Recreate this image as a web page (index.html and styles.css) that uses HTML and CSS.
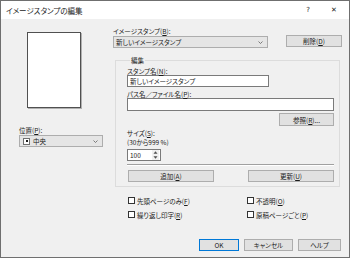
FILE: index.html
```html
<!DOCTYPE html>
<html lang="ja">
<head>
    <meta charset="UTF-8">
    <title>イメージスタンプの編集</title>
    <link rel="stylesheet" href="styles.css">
</head>
<body>
    <div class="dialog">
        <div class="titlebar">
            <span class="title">イメージスタンプの編集</span>
            <span class="tb-btn">?</span>
            <span class="tb-btn close">✕</span>
        </div>

        <div class="content">
            <div class="main">
                <!-- 左側: プレビューと位置 -->
                <div class="left">
                    <div class="preview"></div>
                    <div class="label pos-label">位置(<u>P</u>):</div>
                    <div class="combo pos-combo">
                        <span class="pos-icon"><span class="dot"></span></span>
                        <span class="combo-text">中央</span>
                        <svg class="chev" width="5" height="3" viewBox="0 0 5 3"><polyline points="0.5,0.5 2.5,2.5 4.5,0.5" fill="none" stroke="#606060" stroke-width="0.8"/></svg>
                    </div>
                </div>

                <!-- 右側 -->
                <div class="right">
                    <div class="label">イメージスタンプ(<u>B</u>):</div>
                    <div class="stamp-row">
                        <div class="combo stamp-combo">
                            <span class="combo-text">新しいイメージスタンプ</span>
                            <svg class="chev" width="5" height="3" viewBox="0 0 5 3"><polyline points="0.5,0.5 2.5,2.5 4.5,0.5" fill="none" stroke="#606060" stroke-width="0.8"/></svg>
                        </div>
                        <button class="btn del-btn">削除(<u>D</u>)</button>
                    </div>

                    <fieldset class="group">
                        <legend>編集</legend>
                        <div class="label">スタンプ名(<u>N</u>):</div>
                        <div class="input name-input">新しいイメージスタンプ</div>

                        <div class="label path-label">パス名／ファイル名(<u>P</u>):</div>
                        <div class="input path-input"></div>
                        <div class="browse-row">
                            <button class="btn browse-btn">参照(<u>R</u>)...</button>
                        </div>

                        <div class="label size-label">サイズ(<u>S</u>):</div>
                        <div class="label size-range">(30から999 %)</div>
                        <div class="spin">
                            <span class="spin-val">100</span>
                            <span class="spin-btns">
                                <svg width="5" height="3" viewBox="0 0 5 3"><polygon points="2.5,0.3 4.5,2.7 0.5,2.7" fill="#505050"/></svg>
                                <svg width="5" height="3" viewBox="0 0 5 3"><polygon points="0.5,0.3 4.5,0.3 2.5,2.7" fill="#505050"/></svg>
                            </span>
                        </div>
                        <div class="sep"></div>
                        <div class="group-btns">
                            <button class="btn">追加(<u>A</u>)</button>
                            <button class="btn">更新(<u>U</u>)</button>
                        </div>
                    </fieldset>

                    <div class="checks">
                        <label class="check"><span class="box"></span>先頭ページのみ(<u>F</u>)</label>
                        <label class="check"><span class="box"></span>不透明(<u>O</u>)</label>
                        <label class="check"><span class="box"></span>繰り返し印字(<u>R</u>)</label>
                        <label class="check"><span class="box"></span>原稿ページごと(<u>P</u>)</label>
                    </div>
                </div>
            </div>

            <div class="footer">
                <button class="btn ok-btn">OK</button>
                <button class="btn cancel-btn">キャンセル</button>
                <button class="btn help-btn">ヘルプ</button>
            </div>
        </div>
    </div>
</body>
</html>
```

FILE: styles.css
```css
* {
    box-sizing: border-box;
}
html, body {
    margin: 0;
    padding: 0;
}
body {
    width: 350px;
    height: 258px;
    overflow: hidden;
    font-family: "Noto Sans CJK JP", sans-serif;
    font-size: 6.5px;
    font-feature-settings: "palt";
    color: #1a1a1a;
}
u {
    text-decoration-thickness: 0.5px;
    text-underline-offset: 1px;
}
.dialog {
    width: 350px;
    height: 258px;
    border: 1px solid #6f6f6f;
    background-color: #f0f0f0;
    display: flex;
    flex-direction: column;
}
.titlebar {
    height: 18px;
    background-color: #fff;
    display: flex;
    align-items: center;
    padding-left: 5px;
    font-size: 7.5px;
}
.title {
    flex: 1;
}
.tb-btn {
    width: 26px;
    text-align: center;
    font-family: "DejaVu Sans", sans-serif;
    font-size: 7px;
}
.close {
    font-size: 7px;
    margin-right: 2px;
}
.content {
    flex: 1;
    display: flex;
    flex-direction: column;
}
.main {
    display: flex;
}
.label {
    height: 8px;
    line-height: 8px;
    white-space: nowrap;
}

/* 左側 */
.left {
    width: 84px;
    margin-left: 18px;
}
.preview {
    width: 54px;
    height: 76px;
    margin: 13px 0 0 8px;
    background-color: #fff;
    border: 1px solid #505050;
    box-shadow: 1px 1px 0 #b0b0b0;
}
.pos-label {
    margin-top: 18px;
}
.combo {
    height: 12px;
    margin-top: 1px;
    background-color: #e5e5e5;
    border: 1px solid #adadad;
    display: flex;
    align-items: center;
    padding: 0 4px 0 2px;
}
.combo-text {
    flex: 1;
}
.pos-icon {
    width: 7px;
    height: 7px;
    border: 1px solid #707070;
    background-color: #fff;
    display: flex;
    align-items: center;
    justify-content: center;
    margin: 0 3px 0 1px;
}
.dot {
    width: 2px;
    height: 2px;
    background-color: #202020;
}

/* 右側 */
.right {
    margin-left: 10px;
    width: 229px;
    padding-top: 8px;
}
.stamp-row {
    display: flex;
    align-items: flex-start;
}
.stamp-combo {
    width: 155px;
}
.btn {
    font-family: inherit;
    font-size: 6.5px;
    font-feature-settings: "palt";
    color: #1a1a1a;
    height: 12px;
    padding: 0;
    background-color: #e1e1e1;
    border: 1px solid #adadad;
    border-radius: 0;
    line-height: 10px;
}
.del-btn {
    width: 56px;
    margin-left: 18px;
}
.group {
    margin: 8px 0 0 2px;
    width: 225px;
    border: 1px solid #dcdcdc;
    padding: 3px 5px 4px 11px;
}
.group legend {
    height: 8px;
    line-height: 8px;
    padding: 0 1px;
    margin-left: 3px;
}
.input {
    height: 12px;
    background-color: #fff;
    border: 1px solid #7a7a7a;
    line-height: 10px;
    padding-left: 2px;
}
.name-input {
    width: 142px;
}
.path-label {
    margin-top: 3px;
}
.path-input {
    width: 207px;
    height: 13px;
}
.browse-row {
    display: flex;
    justify-content: flex-end;
    margin-top: 2px;
}
.browse-btn {
    width: 55px;
    height: 13px;
}
.size-label,
.size-range {
    height: 9px;
    line-height: 9px;
}
.size-label {
    margin-top: 3px;
}
.spin {
    width: 34px;
    height: 12px;
    margin-top: 2px;
    background-color: #fff;
    border: 1px solid #7a7a7a;
    display: flex;
    align-items: center;
}
.spin-val {
    flex: 1;
    padding-left: 2px;
}
.spin-btns {
    width: 7px;
    height: 10px;
    margin-right: 1px;
    display: flex;
    flex-direction: column;
    align-items: center;
    justify-content: space-around;
    background-color: #f0f0f0;
}
.spin-btns svg {
    display: block;
}
.sep {
    width: 207px;
    margin-top: 3px;
    border-top: 1px solid #a0a0a0;
    border-bottom: 1px solid #fff;
}
.group-btns {
    display: flex;
    justify-content: space-between;
    width: 207px;
    margin-top: 4px;
}
.group-btns .btn {
    width: 86px;
}
.group-btns .btn:first-child {
    margin-left: 1px;
}

/* チェックボックス */
.checks {
    display: grid;
    grid-template-columns: 119px 1fr;
    row-gap: 5px;
    margin: 9px 0 0 15px;
}
.check {
    display: flex;
    align-items: center;
    height: 9px;
    white-space: nowrap;
}
.box {
    width: 7px;
    height: 7px;
    border: 1px solid #333;
    background-color: #fff;
    margin-right: 2px;
}

/* 下部ボタン */
.footer {
    margin-top: auto;
    display: flex;
    justify-content: flex-end;
    gap: 5px;
    padding: 0 8px 6px 0;
}
.footer .btn {
    height: 12px;
}
.ok-btn {
    width: 40px;
    border-color: #0078d7;
}
.cancel-btn {
    width: 49px;
}
.help-btn {
    width: 43px;
}
```
